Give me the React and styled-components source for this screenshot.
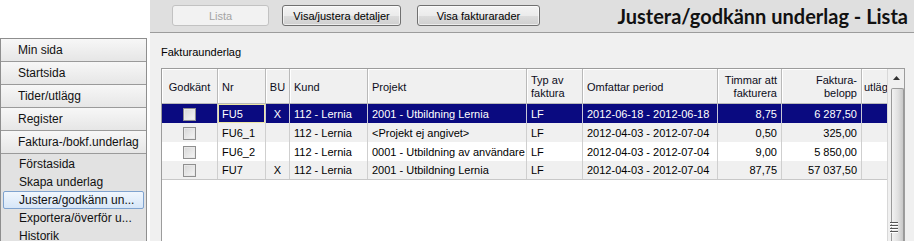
import React from 'react';
import styled, { createGlobalStyle } from 'styled-components';

const GlobalStyle = createGlobalStyle`
  html, body {
    margin: 0;
    padding: 0;
    background: #fff;
    overflow: hidden;
  }
  body {
    font-family: "Liberation Sans", Arial, sans-serif;
    font-size: 11px;
    color: #000;
  }
`;

const menuItems = ['Min sida', 'Startsida', 'Tider/utlägg', 'Register', 'Faktura-/bokf.underlag'];
const subItems = ['Förstasida', 'Skapa underlag', 'Justera/godkänn un...', 'Exportera/överför u...', 'Historik'];

// kolumnbredder inkl. högerkant
const COLS = '56px 48px 24px 78px 159px 56px 135px 64px 80px 25px';

const columns = [
  { label: 'Godkänt', align: 'center' },
  { label: 'Nr' },
  { label: 'BU', align: 'center' },
  { label: 'Kund' },
  { label: 'Projekt' },
  { label: ['Typ av', 'faktura'] },
  { label: 'Omfattar period' },
  { label: ['Timmar att', 'fakturera'], align: 'right' },
  { label: ['Faktura-', 'belopp'], align: 'right' },
  { label: 'utlägg' },
];

const rows = [
  { nr: 'FU5', bu: 'X', kund: '112 - Lernia', projekt: '2001 - Utbildning Lernia', typ: 'LF', period: '2012-06-18 - 2012-06-18', timmar: '8,75', belopp: '6 287,50', selected: true },
  { nr: 'FU6_1', bu: '', kund: '112 - Lernia', projekt: '<Projekt ej angivet>', typ: 'LF', period: '2012-04-03 - 2012-07-04', timmar: '0,50', belopp: '325,00' },
  { nr: 'FU6_2', bu: '', kund: '112 - Lernia', projekt: '0001 - Utbildning av användare', typ: 'LF', period: '2012-04-03 - 2012-07-04', timmar: '9,00', belopp: '5 850,00' },
  { nr: 'FU7', bu: 'X', kund: '112 - Lernia', projekt: '2001 - Utbildning Lernia', typ: 'LF', period: '2012-04-03 - 2012-07-04', timmar: '87,75', belopp: '57 037,50' },
];

const App = () => {
  return (
    <>
      <GlobalStyle />
      <Page>
        <Side>
          <Menu>
            {menuItems.map((m) => (
              <MenuItem key={m}>{m}</MenuItem>
            ))}
            <SubMenu>
              {subItems.map((s, i) => (
                <SubItem key={s} active={i === 2}>
                  {s}
                </SubItem>
              ))}
            </SubMenu>
          </Menu>
        </Side>
        <Main>
          <Toolbar>
            <ToolButton disabled width={97}>Lista</ToolButton>
            <ToolButton width={119}>Visa/justera detaljer</ToolButton>
            <ToolButton width={123} extra={3}>Visa fakturarader</ToolButton>
            <Title>Justera/godkänn underlag - Lista</Title>
          </Toolbar>
          <Content>
            <Label>Fakturaunderlag</Label>
            <Frame>
              <Grid>
                <HeaderRow>
                  {columns.map((c, i) => (
                    <HeadCell key={i} align={c.align}>
                      {Array.isArray(c.label) ? (
                        <span>
                          {c.label[0]}
                          <br />
                          {c.label[1]}
                        </span>
                      ) : (
                        <span>{c.label}</span>
                      )}
                    </HeadCell>
                  ))}
                </HeaderRow>
                {rows.map((r, i) => (
                  <Row key={r.nr} selected={r.selected} odd={i % 2 === 1}>
                    <Cell align="center" selected={r.selected}>
                      <Check />
                    </Cell>
                    <Cell selected={r.selected} focused={r.selected}>{r.nr}</Cell>
                    <Cell align="center" selected={r.selected}>{r.bu}</Cell>
                    <Cell selected={r.selected}>{r.kund}</Cell>
                    <Cell selected={r.selected}>{r.projekt}</Cell>
                    <Cell selected={r.selected}>{r.typ}</Cell>
                    <Cell selected={r.selected}>{r.period}</Cell>
                    <Cell align="right" selected={r.selected}>{r.timmar}</Cell>
                    <Cell align="right" selected={r.selected}>{r.belopp}</Cell>
                    <Cell selected={r.selected} />
                  </Row>
                ))}
                <Empty />
              </Grid>
              <ScrollBar>
                <ArrowButton>
                  <svg width="7" height="4" viewBox="0 0 7 4">
                    <path d="M0 4 L3.5 0 L7 4 Z" fill="#333" />
                  </svg>
                </ArrowButton>
                <Thumb>
                  <Grip>
                    <i />
                    <i />
                    <i />
                    <i />
                  </Grip>
                </Thumb>
              </ScrollBar>
            </Frame>
          </Content>
        </Main>
      </Page>
    </>
  );
};

const Page = styled.div`
  display: flex;
  width: 914px;
  height: 241px;
  overflow: hidden;
`;

const Side = styled.div`
  width: 150px;
  flex-shrink: 0;
  padding-top: 38px;
  box-sizing: border-box;
  background: #fff;
  display: flex;
`;

const Menu = styled.div`
  width: 147px;
  box-sizing: border-box;
  border: 1px solid #8e8e8e;
  border-bottom: 0;
  background: #e2e2e2;
  display: flex;
  flex-direction: column;
`;

const MenuItem = styled.div`
  height: 22px;
  line-height: 22px;
  padding-left: 17px;
  font-size: 12px;
  color: #111;
  white-space: nowrap;
  border-bottom: 1px solid #9a9a9a;
  background: linear-gradient(#f7f7f7, #e6e6e6);
`;

const SubMenu = styled.div`
  display: flex;
  flex-direction: column;
  padding-top: 1px;
  background: #e2e2e2;
`;

const SubItem = styled.div`
  height: 18px;
  line-height: 17px;
  padding-left: 15px;
  margin: 0 2px;
  font-size: 12px;
  color: #111;
  white-space: nowrap;
  box-sizing: border-box;
  border: 1px solid transparent;
  border-radius: 2px;
  ${({ active }) =>
    active &&
    `
    border-color: #7fa3cf;
    background: linear-gradient(#f0f6fd, #d6e6f8);
  `}
`;

const Main = styled.div`
  flex: 1;
  display: flex;
  flex-direction: column;
  background: #f0f0f0;
`;

const Toolbar = styled.div`
  height: 33px;
  flex-shrink: 0;
  box-sizing: border-box;
  display: flex;
  align-items: center;
  padding: 0 6px 1px 22px;
  gap: 13px;
  background: #dfdfdf;
  border-bottom: 1px solid #9c9c9c;
`;

const ToolButton = styled.button`
  width: ${({ width }) => width}px;
  height: 21px;
  padding: 0;
  margin-left: ${({ extra }) => extra || 0}px;
  font-family: "Liberation Sans", Arial, sans-serif;
  font-size: 11px;
  color: #000;
  border: 1px solid #707070;
  border-radius: 3px;
  background: linear-gradient(#f4f4f4 0%, #ebebeb 50%, #dddddd 51%, #cfcfcf 100%);
  box-shadow: inset 0 0 0 1px rgba(255, 255, 255, 0.6);
  &:disabled {
    color: #a3a3a3;
    border-color: #c2c2c2;
    background: #f2f2f2;
    box-shadow: none;
  }
`;

const Title = styled.div`
  margin-left: auto;
  font-family: Lato, "Liberation Sans", sans-serif;
  font-weight: 700;
  font-size: 20px;
  color: #111;
  white-space: nowrap;
`;

const Content = styled.div`
  flex: 1;
  padding: 13px 0 0 11px;
  display: flex;
  flex-direction: column;
`;

const Label = styled.div`
  height: 13px;
  line-height: 13px;
  margin-bottom: 9px;
`;

const Frame = styled.div`
  width: 744px;
  flex: 1;
  box-sizing: border-box;
  border: 1px solid #9c9c9c;
  border-bottom: 0;
  display: flex;
  background: #fff;
`;

const Grid = styled.div`
  width: 725px;
  display: flex;
  flex-direction: column;
`;

const HeaderRow = styled.div`
  display: grid;
  grid-template-columns: ${COLS};
  height: 35px;
  background: #f0f0f0;
`;

const HeadCell = styled.div`
  box-sizing: border-box;
  border-right: 1px solid #b9b9b9;
  border-bottom: 1px solid #b9b9b9;
  box-shadow: inset 1px 1px 0 #fff;
  display: flex;
  align-items: center;
  justify-content: ${({ align }) =>
    align === 'center' ? 'center' : align === 'right' ? 'flex-end' : 'flex-start'};
  text-align: ${({ align }) => align || 'left'};
  padding: 2px 4px 0;
  line-height: 13px;
  color: #0d0d20;
  white-space: nowrap;
  overflow: hidden;
  &:last-child {
    padding: 2px 0 0 2px;
    border-right: 0;
  }
`;

const Row = styled.div`
  display: grid;
  grid-template-columns: ${COLS};
  height: 19px;
  background: ${({ selected, odd }) => (selected ? '#0a0a80' : odd ? '#f0f0f0' : '#fff')};
  color: ${({ selected }) => (selected ? '#fff' : '#000')};
  &:nth-of-type(5) {
    height: 18px;
    border-bottom: 1px solid #c8c8c8;
  }
`;

const Cell = styled.div`
  box-sizing: border-box;
  border-right: 1px solid ${({ selected }) => (selected ? '#c8c8d8' : '#cfcfcf')};
  padding: 0 4px;
  display: flex;
  align-items: center;
  justify-content: ${({ align }) =>
    align === 'center' ? 'center' : align === 'right' ? 'flex-end' : 'flex-start'};
  white-space: nowrap;
  overflow: hidden;
  ${({ focused }) => focused && `box-shadow: inset 0 0 0 1px #ece6a4;`}
  &:last-child {
    border-right: 0;
  }
`;

const Check = styled.span`
  width: 13px;
  height: 13px;
  box-sizing: border-box;
  border: 1px solid #8f8f8f;
  background: linear-gradient(135deg, #d6d6d6, #f6f6f6);
  box-shadow: inset 0 0 0 1px #e8e8e8;
  margin-top: 1px;
`;

const Empty = styled.div`
  flex: 1;
  background: #fff;
`;

const ScrollBar = styled.div`
  width: 17px;
  display: flex;
  flex-direction: column;
  background: #f0f0f0;
  border-left: 1px solid #d8d8d8;
  box-sizing: border-box;
`;

const ArrowButton = styled.div`
  height: 18px;
  display: flex;
  align-items: center;
  justify-content: center;
  padding-left: 1px;
`;

const Thumb = styled.div`
  flex: 1;
  margin: 1px 0 0 3px;
  border: 1px solid #9a9a9a;
  border-bottom: 0;
  border-radius: 2px 2px 0 0;
  background: linear-gradient(90deg, #f2f2f2, #e0e0e0 55%, #c8c8c8);
  display: flex;
  flex-direction: column;
  justify-content: flex-end;
  padding-bottom: 8px;
`;

const Grip = styled.div`
  display: flex;
  flex-direction: column;
  gap: 1px;
  align-items: flex-start;
  margin-left: -2px;
  i {
    display: block;
    width: 8px;
    height: 1px;
    border-bottom: 1px solid #fff;
    background: #555;
  }
`;

export default App;
